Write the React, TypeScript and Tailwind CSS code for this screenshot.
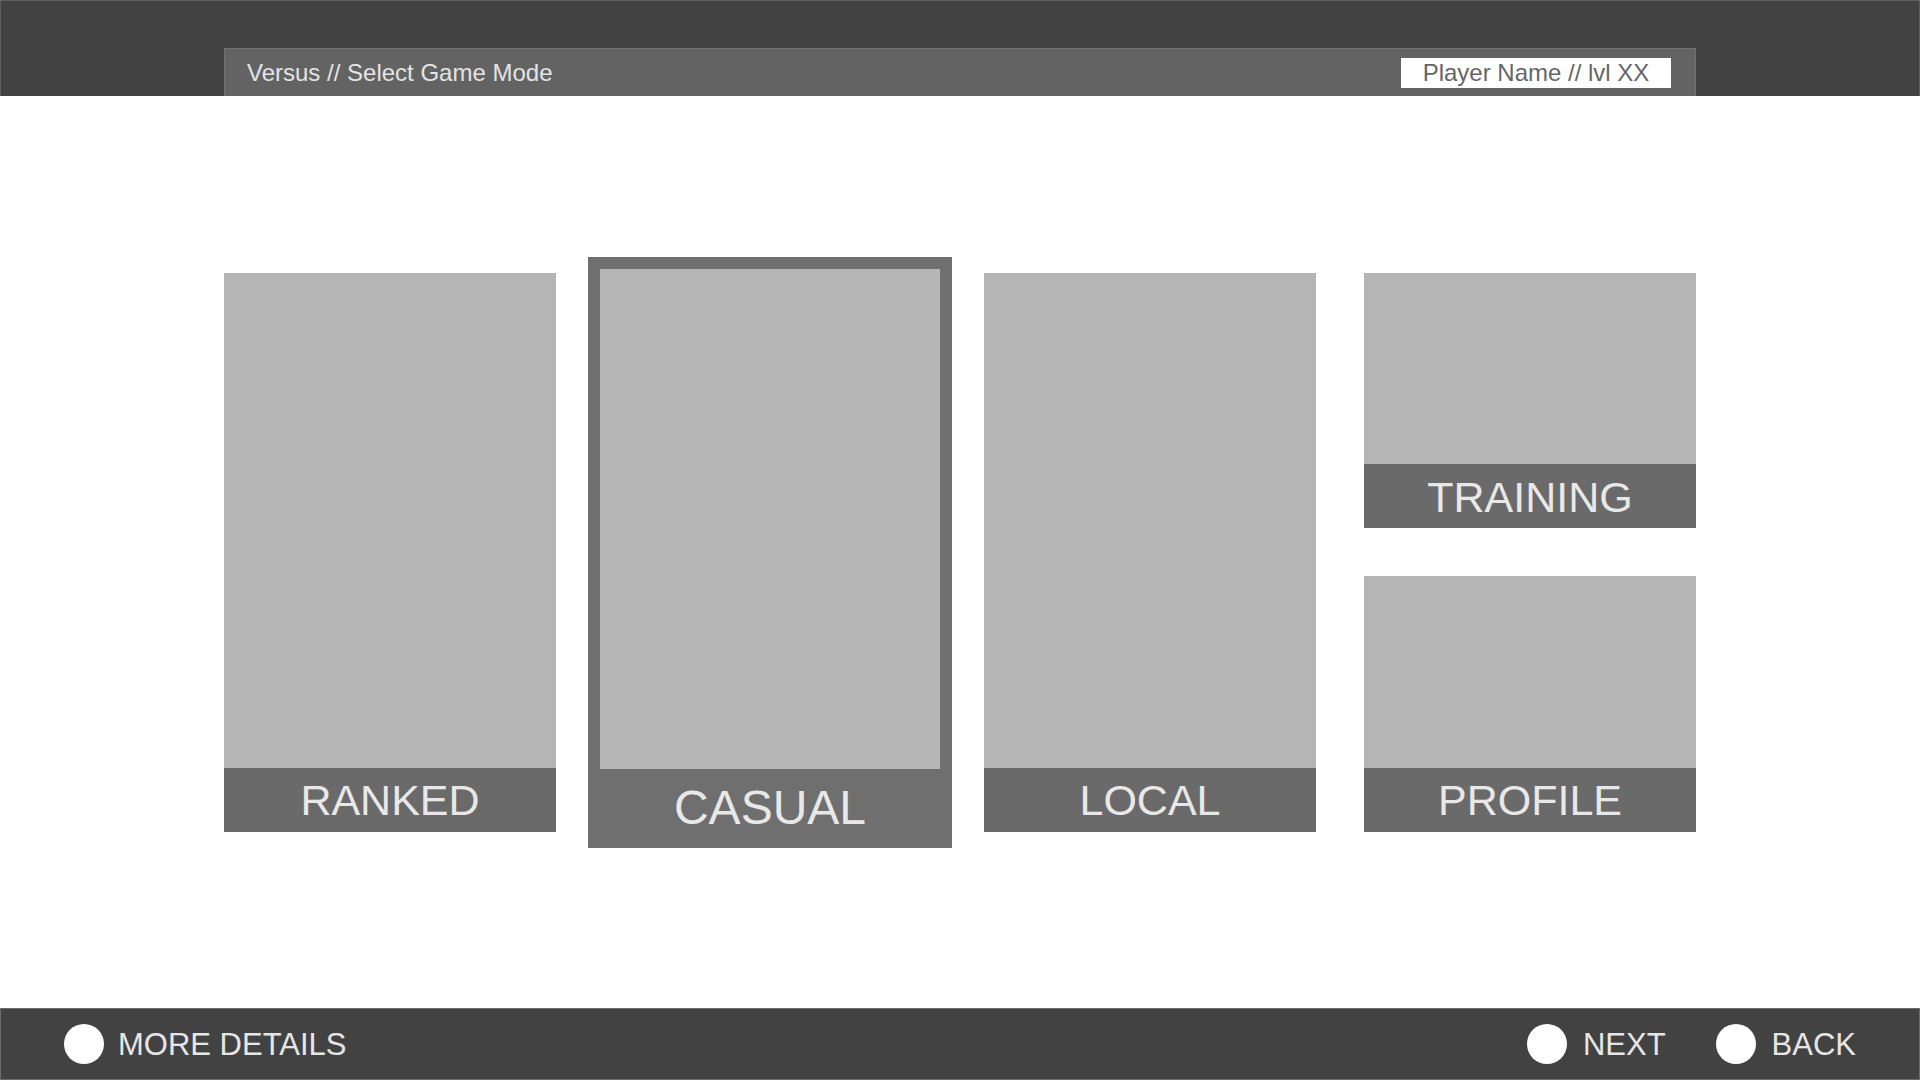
import React from "react";

function Card({ label }: { label: string }) {
  return (
    <div className="flex h-full flex-col">
      <div className="flex-1 bg-[#b5b5b5]" />
      <div className="flex h-[64px] items-center justify-center bg-[#6a6a6a] pt-[2px] text-[43px] leading-none text-[#e8e8e8]">
        {label}
      </div>
    </div>
  );
}

function SelectedCard({ label }: { label: string }) {
  return (
    <div className="-m-4 flex flex-col bg-[#6f6f6f] px-3 pt-3">
      <div className="flex-1 bg-[#b5b5b5]" />
      <div className="flex h-[79px] items-center justify-center text-[48px] leading-none text-[#e8e8e8]">
        {label}
      </div>
    </div>
  );
}

function Hint({ label, gap }: { label: string; gap: string }) {
  return (
    <div className={"flex items-center " + gap}>
      <div className="h-[40px] w-[40px] rounded-full bg-white" />
      <span className="text-[31px] leading-none text-[#e6e6e6]">{label}</span>
    </div>
  );
}

export default function App() {
  return (
    <div
      className="flex h-[1080px] w-[1920px] flex-col bg-white"
      style={{ fontFamily: '"Liberation Sans", Arial, sans-serif' }}
    >
      <header className="flex h-[96px] items-end justify-center border-x border-t border-[#5e5e5e] bg-[#424242]">
        <div className="flex h-[48px] w-[1472px] items-center justify-between border-x border-t border-[#717171] bg-[#636363] pl-[22px] pr-[24px]">
          <span className="text-[24px] leading-none text-[#e4e4e4]">Versus // Select Game Mode</span>
          <div className="flex h-[30px] w-[270px] items-center justify-center bg-white text-[24px] leading-none text-[#666666]">
            Player Name // lvl XX
          </div>
        </div>
      </header>

      <main className="flex flex-1 items-center justify-center">
        <div className="grid h-[559px] grid-cols-[repeat(4,332px)] gap-x-12">
          <Card label="RANKED" />
          <SelectedCard label="CASUAL" />
          <Card label="LOCAL" />
          <div className="flex flex-col gap-12">
            <div className="flex-1">
              <Card label="TRAINING" />
            </div>
            <div className="flex-1">
              <Card label="PROFILE" />
            </div>
          </div>
        </div>
      </main>

      <footer className="flex h-[72px] items-center justify-between border border-[#6b6b6b] bg-[#424242] pl-[63px] pr-[63px]">
        <Hint label="MORE DETAILS" gap="gap-[14px]" />
        <div className="flex items-center gap-[50px]">
          <Hint label="NEXT" gap="gap-[16px]" />
          <Hint label="BACK" gap="gap-[16px]" />
        </div>
      </footer>
    </div>
  );
}
